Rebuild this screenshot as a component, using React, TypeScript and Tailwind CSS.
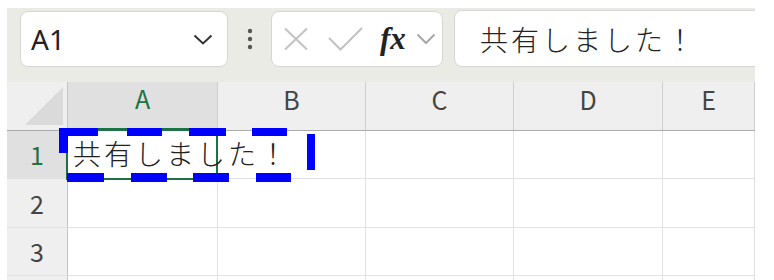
import React from "react";

const CJK = { fontFamily: '"Noto Sans CJK JP", "Noto Sans", sans-serif' };

export default function App() {
  const cols = [
    { l: "A", w: "w-[150px]", sel: true },
    { l: "B", w: "w-[148px]" },
    { l: "C", w: "w-[148px]" },
    { l: "D", w: "w-[149px]" },
    { l: "E", w: "flex-1" },
  ];
  const rows = [
    { n: "1", h: "h-[48px]", sel: true },
    { n: "2", h: "h-[49px]" },
    { n: "3", h: "h-[48px]" },
    { n: "", h: "h-[48px]" },
  ];
  return (
    <div className="relative w-[774px] h-[280px] overflow-hidden bg-white pt-[8px] pl-[7px]">
      <div className="w-[748px] overflow-hidden">
        {/* toolbar */}
        <div className="flex items-start bg-[#ebebe6] pt-[3px] pb-[15px] pl-[13px] h-[74px]">
          <div className="w-[208px] h-[56px] rounded-[8px] border border-[#d6d6d6] bg-white flex items-center justify-between pl-[10px] pr-[14px] box-border">
            <span className="text-[28px] text-[#222] leading-none" style={{ fontFamily: '"Noto Sans", "Open Sans", sans-serif' }}>A1</span>
            <svg width="20" height="11" viewBox="0 0 20 11" fill="none">
              <path d="M1.5 1.5 L10 9.5 L18.5 1.5" stroke="#333" strokeWidth="2" />
            </svg>
          </div>
          <div className="w-[43px] h-[56px] flex items-center justify-center">
            <svg width="6" height="22" viewBox="0 0 6 22">
              <circle cx="3" cy="3" r="2.2" fill="#555" />
              <circle cx="3" cy="11" r="2.2" fill="#555" />
              <circle cx="3" cy="19" r="2.2" fill="#555" />
            </svg>
          </div>
          <div className="w-[172px] h-[56px] rounded-[8px] border border-[#d6d6d6] bg-white flex items-center pl-[11px] box-border">
            <svg width="26" height="24" viewBox="0 0 26 24" fill="none">
              <path d="M2 1.5 L24 22.5 M24 1.5 L2 22.5" stroke="#c2c2c2" strokeWidth="2" />
            </svg>
            <svg className="ml-[19px]" width="35" height="24" viewBox="0 0 35 24" fill="none">
              <path d="M1 11 L12.5 22.5 L34 1" stroke="#c2c2c2" strokeWidth="2" />
            </svg>
            <span className="ml-[17px] text-[31px] leading-none italic font-bold text-[#222] -mt-[2px]" style={{ fontFamily: '"Liberation Serif", "DejaVu Serif", serif' }}>fx</span>
            <svg className="ml-[10px]" width="20" height="12" viewBox="0 0 20 12" fill="none">
              <path d="M1.5 1.5 L10 10 L18.5 1.5" stroke="#a8a8a8" strokeWidth="2" />
            </svg>
          </div>
          <div className="ml-[11px] flex-1 mr-[-12px] h-[57px] -mt-[1px] rounded-l-[8px] border border-[#d6d6d6] bg-white flex items-center pl-[25px] box-border">
            <span className="text-[28px] tracking-[3px] font-light text-[#222] leading-none whitespace-nowrap" style={CJK}>
              共有しました！
            </span>
          </div>
        </div>

        {/* column headers */}
        <div className="flex h-[49px] bg-[#efefef] border-b border-[#ababab] box-border">
          <div className="w-[61px] border-r border-[#c4c4c4] flex items-end justify-end pr-[4px] pb-[5px] box-border">
            <svg width="38" height="38" viewBox="0 0 38 38">
              <polygon points="38,0 38,38 0,38" fill="#dadada" />
            </svg>
          </div>
          {cols.map((c) => (
            <div
              key={c.l}
              className={`${c.w} shrink-0 border-r border-[#cfcfcf] flex items-center justify-center pb-[13px] box-border ${c.sel ? "bg-[#e0e0e0] border-b-[3px] border-b-[#1e7145] -mb-[1px]" : ""}`}
            >
              <span className={`text-[25px] leading-none ${c.sel ? "text-[#1e7145]" : "text-[#444]"}`} style={CJK}>
                {c.l}
              </span>
            </div>
          ))}
        </div>

        {/* rows */}
        {rows.map((r, ri) => (
          <div key={ri} className={`flex ${r.h} border-b border-[#e1e1e1] box-border`}>
            <div className={`w-[61px] shrink-0 border-r border-[#c4c4c4] flex items-center justify-center box-border ${r.sel ? "bg-[#e0e0e0]" : "bg-[#efefef]"}`}>
              {r.n ? (
                <span className={`text-[25px] leading-none ${r.sel ? "text-[#1e7145]" : "text-[#444]"}`} style={CJK}>
                  {r.n}
                </span>
              ) : null}
            </div>
            {cols.map((c, i) => (
              <div key={c.l} className={`${c.w} shrink-0 ${r.sel && i === 0 ? "" : "border-r border-[#e1e1e1]"} flex items-center box-border`}>
                {r.sel && i === 0 ? (
                  <span className="relative z-[1] pl-[5px] pb-[3px] text-[28px] tracking-[3px] font-light text-[#222] leading-none whitespace-nowrap" style={CJK}>
                    共有しました！
                  </span>
                ) : null}
              </div>
            ))}
          </div>
        ))}
      </div>

      {/* active cell border */}
      <div className="absolute left-[66px] top-[129px] w-[152px] h-[51px] border-2 border-[#1e7145] pointer-events-none" />

      {/* copy marquee */}
      <svg className="absolute left-0 top-0 pointer-events-none" width="774" height="280" viewBox="0 0 774 280">
        <g fill="#0000ff">
          <rect x="59" y="128" width="39" height="8" />
          <rect x="127" y="128" width="35" height="8" />
          <rect x="189" y="128" width="37" height="8" />
          <rect x="252" y="128" width="35" height="8" />
          <rect x="59" y="128" width="9" height="25" />
          <rect x="67" y="173" width="37" height="9" />
          <rect x="131" y="173" width="36" height="9" />
          <rect x="193" y="173" width="36" height="9" />
          <rect x="256" y="173" width="35" height="9" />
          <rect x="307" y="134" width="8" height="36" />
        </g>
      </svg>
    </div>
  );
}
